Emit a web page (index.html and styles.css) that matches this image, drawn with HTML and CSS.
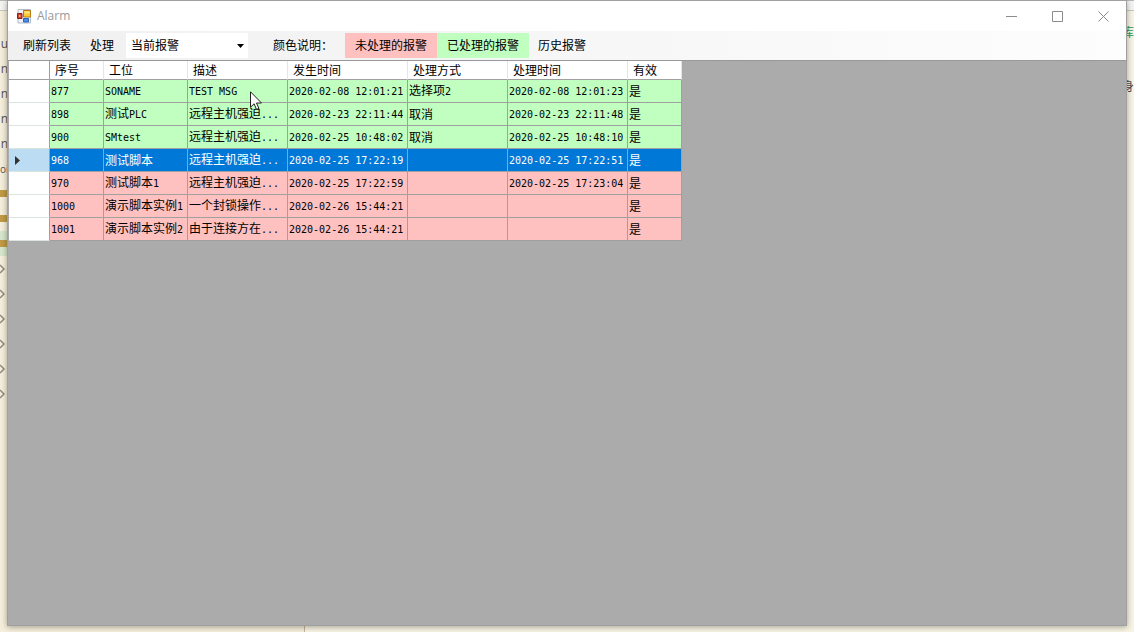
FILE: index.html
```html
<!DOCTYPE html>
<html lang="zh-CN">
<head>
<meta charset="utf-8">
<title>Alarm</title>
<link rel="stylesheet" href="styles.css">
</head>
<body>
<div class="desktop">
  <div class="backdrop">
    <div class="tree">
      <div class="tree-row">u</div>
      <div class="tree-row">n</div>
      <div class="tree-row">n</div>
      <div class="tree-row">n</div>
      <div class="tree-row">n</div>
      <div class="tree-row file">oi3</div>
      <div class="tree-row folder"><i></i></div>
      <div class="tree-row folder"><i></i></div>
      <div class="tree-row folder active"><i></i></div>
      <div class="tree-row node"><svg width="6" height="10" viewBox="0 0 6 10"><path d="M0 1 4 5 0 9"/></svg></div>
      <div class="tree-row node"><svg width="6" height="10" viewBox="0 0 6 10"><path d="M0 1 4 5 0 9"/></svg></div>
      <div class="tree-row node"><svg width="6" height="10" viewBox="0 0 6 10"><path d="M0 1 4 5 0 9"/></svg></div>
      <div class="tree-row node"><svg width="6" height="10" viewBox="0 0 6 10"><path d="M0 1 4 5 0 9"/></svg></div>
      <div class="tree-row node"><svg width="6" height="10" viewBox="0 0 6 10"><path d="M0 1 4 5 0 9"/></svg></div>
      <div class="tree-row node"><svg width="6" height="10" viewBox="0 0 6 10"><path d="M0 1 4 5 0 9"/></svg></div>
    </div>
    <div class="split"></div>
    <div class="editor">
      <div class="code comment">库</div>
      <div class="code">身</div>
    </div>
  </div>

  <main class="window">
    <header class="titlebar">
      <svg class="app-icon" width="15" height="15" viewBox="0 0 15 15">
        <path d="M1 .5h12.500v13.500H1z" fill="#eef2fa" stroke="#b5bac8"/>
        <path d="M6.500 1.500h7v6.500h-7z" fill="#fcc939" stroke="#b57a12"/>
        <path d="M7.500 2.500h5v2h-5z" fill="#ffe58a"/>
        <path d="M.5 4.500h4.500v5H.5z" fill="#d1422c" stroke="#8c1f14"/>
        <path d="M2 6h1.500v2H2z" fill="#f3a08e"/>
        <path d="M6.500 9.500h5v3.500h-5z" fill="#4f8fe0" stroke="#2b62b5"/>
      </svg>
      <h1 class="title">Alarm</h1>
      <div class="controls">
        <button class="control" aria-label="最小化"><svg width="11" height="11" viewBox="0 0 11 11"><path d="M0 5.500h11"/></svg></button>
        <button class="control" aria-label="最大化"><svg width="11" height="11" viewBox="0 0 11 11"><path d="M.5.5h10v10H.5z"/></svg></button>
        <button class="control" aria-label="关闭"><svg width="11" height="11" viewBox="0 0 11 11"><path d="M.5.5l10 10M10.500.5l-10 10"/></svg></button>
      </div>
    </header>

    <div class="toolbar">
      <button class="tool">刷新列表</button>
      <button class="tool">处理</button>
      <div class="combo">
        <select aria-label="报警类型"><option>当前报警</option><option>历史报警</option></select>
        <svg class="combo-arrow" width="7" height="4" viewBox="0 0 7 4"><path d="M0 0h7L3.500 4z"/></svg>
      </div>
      <span class="legend-title">颜色说明：</span>
      <span class="legend pending">未处理的报警</span>
      <span class="legend handled">已处理的报警</span>
      <button class="tool">历史报警</button>
    </div>

    <div class="grid">
      <table>
        <colgroup><col class="c-mark"><col class="c-id"><col class="c-station"><col class="c-desc"><col class="c-time"><col class="c-way"><col class="c-time"><col class="c-valid"></colgroup>
        <thead>
          <tr><td></td><th>序号</th><th>工位</th><th>描述</th><th>发生时间</th><th>处理方式</th><th>处理时间</th><th>有效</th></tr>
        </thead>
        <tbody>
          <tr class="handled"><th></th><td><b>877</b></td><td><b>SONAME</b></td><td><b>TEST MSG</b></td><td><b>2020-02-08 12:01:21</b></td><td>选择项<b>2</b></td><td><b>2020-02-08 12:01:23</b></td><td>是</td></tr>
          <tr class="handled"><th></th><td><b>898</b></td><td>测试<b>PLC</b></td><td>远程主机强迫<b>...</b></td><td><b>2020-02-23 22:11:44</b></td><td>取消</td><td><b>2020-02-23 22:11:48</b></td><td>是</td></tr>
          <tr class="handled"><th></th><td><b>900</b></td><td><b>SMtest</b></td><td>远程主机强迫<b>...</b></td><td><b>2020-02-25 10:48:02</b></td><td>取消</td><td><b>2020-02-25 10:48:10</b></td><td>是</td></tr>
          <tr class="selected"><th><svg width="5" height="9" viewBox="0 0 5 9"><path d="M0 0l5 4.500L0 9z"/></svg></th><td><b>968</b></td><td>测试脚本</td><td>远程主机强迫<b>...</b></td><td><b>2020-02-25 17:22:19</b></td><td></td><td><b>2020-02-25 17:22:51</b></td><td>是</td></tr>
          <tr class="pending"><th></th><td><b>970</b></td><td>测试脚本<b>1</b></td><td>远程主机强迫<b>...</b></td><td><b>2020-02-25 17:22:59</b></td><td></td><td><b>2020-02-25 17:23:04</b></td><td>是</td></tr>
          <tr class="pending"><th></th><td><b>1000</b></td><td>演示脚本实例<b>1</b></td><td>一个封锁操作<b>...</b></td><td><b>2020-02-26 15:44:21</b></td><td></td><td></td><td>是</td></tr>
          <tr class="pending"><th></th><td><b>1001</b></td><td>演示脚本实例<b>2</b></td><td>由于连接方在<b>...</b></td><td><b>2020-02-26 15:44:21</b></td><td></td><td></td><td>是</td></tr>
        </tbody>
      </table>
    </div>
  </main>

  <svg class="cursor" width="13" height="20" viewBox="0 0 13 20"><path d="M.5.8v15.400l3.600-3.400 2.400 5.600 2.400-1-2.400-5.400h5z"/></svg>
</div>
</body>
</html>
```
FILE: styles.css
```css
* {
  box-sizing: border-box;
}

body {
  margin: 0;
  font: 12px/16px "Noto Sans CJK SC", sans-serif;
  color: #000;
}

button,
select {
  font: inherit;
  color: inherit;
  border: 0;
  margin: 0;
  background: none;
}

svg {
  display: block;
}

.desktop {
  position: relative;
  display: flex;
  min-height: 100vh;
  padding: 0 7px 6px;
  background: #f8f4e3;
  overflow: hidden;
}

/* Editor visible behind the window */
.backdrop {
  position: absolute;
  inset: 0;
  display: flex;
  border-top: 1px solid #b8b8b8;
}

.tree {
  width: 304px;
  padding-top: 30px;
  background: linear-gradient(#f4f4f2 9px, #c9c7bd 9px, #c9c7bd 10px, #f5eedb 10px);
}

.tree-row {
  display: flex;
  align-items: center;
  justify-content: flex-end;
  width: 8px;
  height: 25px;
  font-family: "Open Sans", sans-serif;
  color: #555;
}

.file,
.folder,
.node {
  justify-content: flex-start;
}

.file {
  font-size: 10px;
}

.folder i {
  width: 7px;
  height: 7px;
  background: #c09a45;
}

.active {
  background: #d5e6ca;
}

.node path {
  fill: none;
  stroke: #8f8b7e;
  stroke-width: 1.5;
}

.split {
  width: 1px;
  background: #c2b69d;
}

.editor {
  flex: 1;
  display: flex;
  flex-direction: column;
  align-items: flex-end;
  gap: 38px;
  padding-top: 23px;
  background: linear-gradient(#f4f4f2 9px, #c9c7bd 9px, #c9c7bd 10px, #f8f4e3 10px);
}

.code {
  color: #444;
}

.comment {
  color: #2e9b4f;
}

.window {
  position: relative;
  flex: 1;
  display: flex;
  flex-direction: column;
  border: 1px solid #a0a0a0;
  background: #fff;
  box-shadow: 0 1px 6px rgba(0, 0, 0, 0.35);
}

.titlebar {
  display: flex;
  height: 30px;
  padding-left: 9px;
  align-items: center;
}

.title {
  flex: 1;
  margin: 0;
  padding-left: 5px;
  font: 12px/16px "Open Sans", sans-serif;
  color: #999;
}

.controls {
  display: flex;
  align-self: stretch;
}

.control {
  display: flex;
  align-items: center;
  justify-content: center;
  width: 46px;
  padding: 0;
}

.control path {
  fill: none;
  stroke: #8c8c8c;
}

.toolbar {
  display: flex;
  align-items: center;
  height: 29px;
  padding-left: 6px;
  background: linear-gradient(90deg, #f0f0f0, #fbfbfb 85%, #fdfdfd);
}

.tool {
  height: 25px;
  padding: 0 9px 1px;
}

.tool + .tool {
  padding: 0 12px 1px 10px;
}

.combo {
  position: relative;
  width: 122px;
}

.combo select {
  display: block;
  width: 100%;
  height: 25px;
  padding: 0 5px 1px;
  appearance: none;
  background: #fff;
  border-radius: 0;
}

.combo-arrow {
  position: absolute;
  right: 4px;
  top: 11px;
  pointer-events: none;
}

.legend-title {
  padding: 0 12px 1px 25px;
}

.legend {
  padding: 4px 10px 5px;
}

.pending {
  background: #ffc0c0;
}

.handled {
  background: #c0ffc0;
}

.grid {
  flex: 1;
  padding-left: 1px;
  border-top: 1px solid #999;
  background: #ababab;
}

table {
  table-layout: fixed;
  width: 673px;
  border-spacing: 0;
}

.c-mark { width: 41px; }
.c-id,
.c-valid { width: 54px; }
.c-station { width: 84px; }
.c-desc,
.c-way { width: 100px; }
.c-time { width: 120px; }

th,
td {
  height: 23px;
  padding: 0 0 0 1px;
  border: solid #a0a0a0;
  border-width: 0 1px 1px 0;
  font-weight: normal;
  text-align: left;
  white-space: nowrap;
}

thead th,
thead td {
  height: 19px;
  padding-left: 5px;
  background: #fff;
  border-right-color: #e5e5e5;
}

thead td {
  border-right-color: #a0a0a0;
}

tbody th {
  padding-left: 6px;
  background: #fff;
  border-bottom-color: #dde3dd;
}

td b {
  font: 10px/16px "DejaVu Sans Mono", monospace;
}

.selected {
  background: #0078d7;
  color: #fff;
}

.selected th {
  background: #bcdcf4;
}

.selected path {
  fill: #333;
}

.cursor {
  position: absolute;
  left: 250px;
  top: 91px;
}

.cursor path {
  fill: #fff;
  stroke: #222;
}
```
